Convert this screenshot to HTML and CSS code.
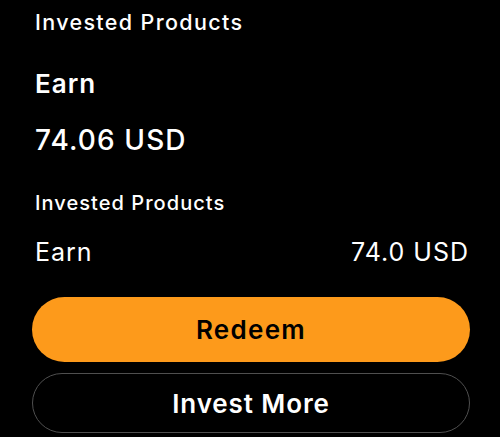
FILE: index.html
```html
<!DOCTYPE html>
<html lang="en">
<head>
<meta charset="utf-8">
<title>Earn</title>
<link rel="stylesheet" href="styles.css">
</head>
<body>
<main class="panel">
  <h2 class="section-title">Invested Products</h2>
  <h1 class="product-name">Earn</h1>
  <p class="product-total">74.06 USD</p>
  <h3 class="list-title">Invested Products</h3>
  <div class="product-row">
    <span class="row-name">Earn</span>
    <span class="row-value">74.0 USD</span>
  </div>
  <div class="actions">
    <button class="btn btn-primary" type="button">Redeem</button>
    <button class="btn btn-outline" type="button">Invest More</button>
  </div>
</main>
</body>
</html>
```

FILE: styles.css
```css
* { box-sizing: border-box; }

html, body {
  margin: 0;
  background: #000;
  color: #fff;
  font-family: Inter, "Noto Sans", sans-serif;
  height: 100%;
  overflow: hidden;
}

.panel {
  display: flex;
  flex-direction: column;
  padding: 8px 30px 0 32px;
}

.section-title,
.product-name,
.product-total,
.list-title {
  margin: 0;
  padding-left: 3px;
}

.section-title {
  font-size: 21.5px;
  line-height: 28px;
  font-weight: 500;
  letter-spacing: 1.35px;
}

.product-name {
  margin-top: 32px;
  font-size: 26px;
  line-height: 32px;
  font-weight: 600;
  letter-spacing: 1px;
}

.product-total {
  margin-top: 23px;
  font-size: 28px;
  line-height: 34px;
  font-weight: 500;
  letter-spacing: 1.1px;
}

.list-title {
  margin-top: 33px;
  font-size: 20px;
  line-height: 26px;
  font-weight: 500;
  letter-spacing: 1.05px;
}

.product-row {
  display: flex;
  justify-content: space-between;
  align-items: baseline;
  margin-top: 20px;
  padding: 0 2px 0 3px;
  font-size: 25px;
  line-height: 32px;
  font-weight: 400;
  letter-spacing: 1px;
}

.row-value {
  margin-right: -1px;
}

.actions {
  display: flex;
  flex-direction: column;
  gap: 11px;
  margin-top: 29px;
}

.btn {
  width: 100%;
  border-radius: 999px;
  font-family: inherit;
  font-size: 26px;
  font-weight: 600;
  cursor: pointer;
}

.btn-primary {
  height: 65px;
  border: none;
  background: #fd9a1b;
  color: #000;
  letter-spacing: 1.3px;
}

.btn-outline {
  height: 60px;
  border: 1px solid #4f4f4f;
  background: transparent;
  color: #fff;
  letter-spacing: 0.9px;
}
```
